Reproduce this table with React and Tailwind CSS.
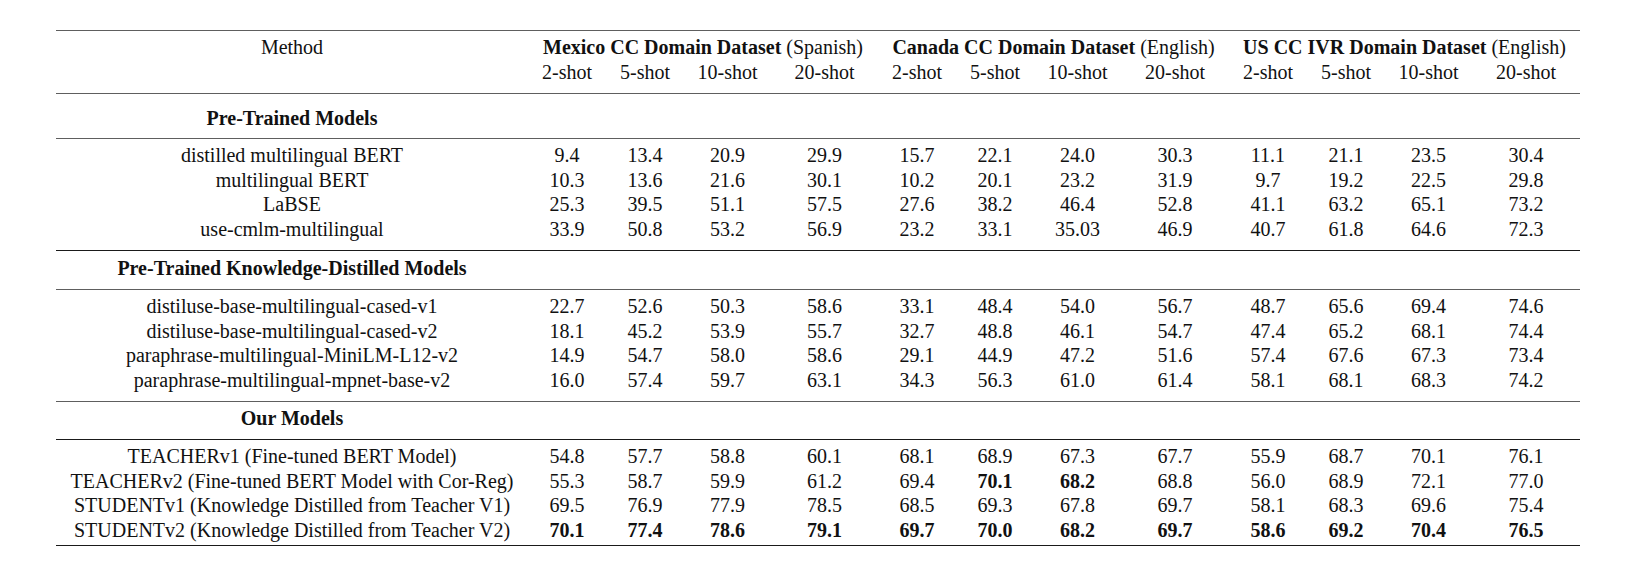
import React from "react";

// column template: method | 4 shots x 3 datasets
const COLS = "grid grid-cols-[472px_78px_78px_87px_107px_78px_78px_87px_108px_78px_78px_87px_108px]";

const GROUPS = [
  ["Mexico CC Domain Dataset", "(Spanish)"],
  ["Canada CC Domain Dataset", "(English)"],
  ["US CC IVR Domain Dataset", "(English)"],
];
const SHOTS = ["2-shot", "5-shot", "10-shot", "20-shot"];

// "*" marks a bold value
const SECTIONS = [
  {
    title: "Pre-Trained Models",
    head: "h-[45px] pt-[11.7px] border-[#5e5e5e]",
    body: "h-[112px] pt-[4px] border-[#5e5e5e]",
    rows: [
      ["distilled multilingual BERT", "9.4 13.4 20.9 29.9 15.7 22.1 24.0 30.3 11.1 21.1 23.5 30.4"],
      ["multilingual BERT", "10.3 13.6 21.6 30.1 10.2 20.1 23.2 31.9 9.7 19.2 22.5 29.8"],
      ["LaBSE", "25.3 39.5 51.1 57.5 27.6 38.2 46.4 52.8 41.1 63.2 65.1 73.2"],
      ["use-cmlm-multilingual", "33.9 50.8 53.2 56.9 23.2 33.1 35.03 46.9 40.7 61.8 64.6 72.3"],
    ],
  },
  {
    title: "Pre-Trained Knowledge-Distilled Models",
    head: "h-[39px] pt-[4.7px] border-[#1a1a1a]",
    body: "h-[112px] pt-[4px] border-[#5e5e5e]",
    rows: [
      ["distiluse-base-multilingual-cased-v1", "22.7 52.6 50.3 58.6 33.1 48.4 54.0 56.7 48.7 65.6 69.4 74.6"],
      ["distiluse-base-multilingual-cased-v2", "18.1 45.2 53.9 55.7 32.7 48.8 46.1 54.7 47.4 65.2 68.1 74.4"],
      ["paraphrase-multilingual-MiniLM-L12-v2", "14.9 54.7 58.0 58.6 29.1 44.9 47.2 51.6 57.4 67.6 67.3 73.4"],
      ["paraphrase-multilingual-mpnet-base-v2", "16.0 57.4 59.7 63.1 34.3 56.3 61.0 61.4 58.1 68.1 68.3 74.2"],
    ],
  },
  {
    title: "Our Models",
    head: "h-[38px] pt-[3.7px] border-[#5e5e5e]",
    body: "h-[107px] pt-[4px] border-[#1a1a1a] border-b",
    rows: [
      ["TEACHERv1 (Fine-tuned BERT Model)", "54.8 57.7 58.8 60.1 68.1 68.9 67.3 67.7 55.9 68.7 70.1 76.1"],
      ["TEACHERv2 (Fine-tuned BERT Model with Cor-Reg)", "55.3 58.7 59.9 61.2 69.4 *70.1 *68.2 68.8 56.0 68.9 72.1 77.0"],
      ["STUDENTv1 (Knowledge Distilled from Teacher V1)", "69.5 76.9 77.9 78.5 68.5 69.3 67.8 69.7 58.1 68.3 69.6 75.4"],
      ["STUDENTv2 (Knowledge Distilled from Teacher V2)", "*70.1 *77.4 *78.6 *79.1 *69.7 *70.0 *68.2 *69.7 *58.6 *69.2 *70.4 *76.5"],
    ],
  },
];

function DataRow({ name, values }) {
  return (
    <div className={COLS}>
      <div className="text-center whitespace-nowrap">{name}</div>
      {values.split(" ").map((v, i) =>
        v.startsWith("*") ? (
          <div key={i} className="text-center font-bold">{v.slice(1)}</div>
        ) : (
          <div key={i} className="text-center">{v}</div>
        )
      )}
    </div>
  );
}

export default function App() {
  return (
    <div className="min-h-screen w-full bg-white pt-[30px] pl-[56px] text-[#111] font-[family-name:'Liberation_Serif','Times_New_Roman',serif] font-normal text-[20px] leading-[24.67px]">
      <div className="w-[1524px]">
        {/* header */}
        <div className="h-[63px] pt-[4px] border-t border-[#5e5e5e]">
          <div className="grid grid-cols-[472px_350px_351px_351px]">
            <div className="text-center">Method</div>
            {GROUPS.map(([b, r]) => (
              <div key={b} className="text-center whitespace-nowrap">
                <span className="font-bold">{b}</span> {r}
              </div>
            ))}
          </div>
          <div className={COLS}>
            <div />
            {GROUPS.map((g) =>
              SHOTS.map((s) => (
                <div key={g[0] + s} className="text-center">{s}</div>
              ))
            )}
          </div>
        </div>

        {SECTIONS.map((sec) => (
          <React.Fragment key={sec.title}>
            <div className={`border-t ${sec.head}`}>
              <div className="w-[472px] text-center font-bold whitespace-nowrap">{sec.title}</div>
            </div>
            <div className={`border-t ${sec.body}`}>
              {sec.rows.map(([n, v]) => (
                <DataRow key={n} name={n} values={v} />
              ))}
            </div>
          </React.Fragment>
        ))}
      </div>
    </div>
  );
}
